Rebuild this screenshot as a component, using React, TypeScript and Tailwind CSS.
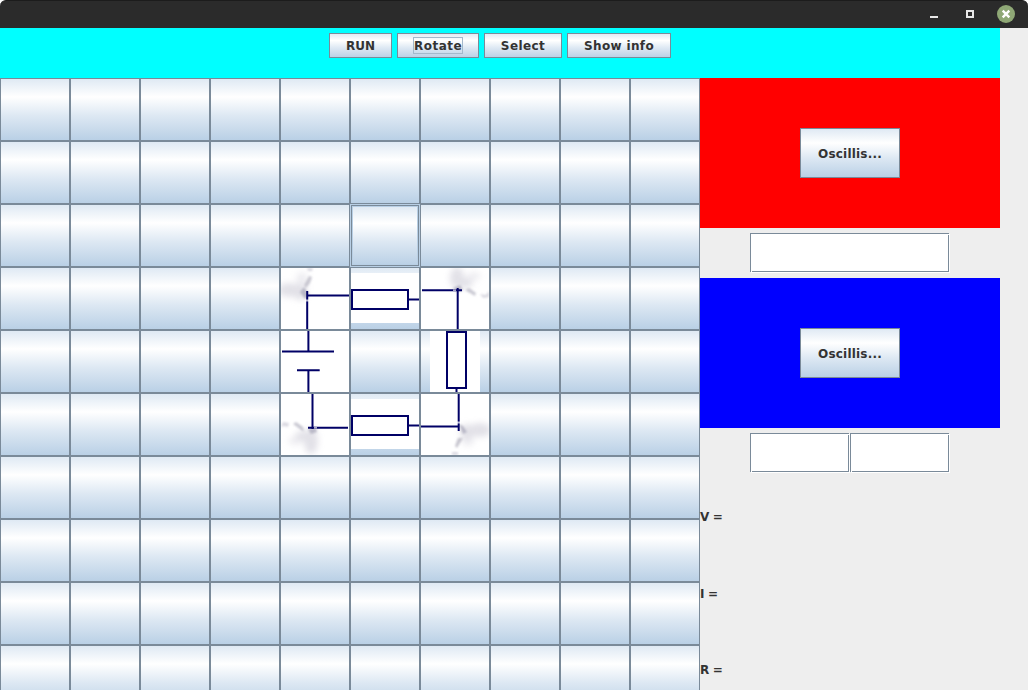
import type { ReactNode } from "react";

const METAL =
  "border border-[#7a8a99] bg-origin-border bg-[linear-gradient(180deg,#dde8f3_0%,#ffffff_30%,#dde8f3_60%,#b8cfe5_100%)]";

const INK = "#000066";

function Drawing({ children }: { children: ReactNode }) {
  return (
    <svg width="68" height="61" viewBox="0 0 68 61" className="block" fill="none" stroke={INK} strokeWidth="2">
      <defs>
        <filter id="smudge" x="-50%" y="-50%" width="200%" height="200%">
          <feGaussianBlur stdDeviation="3" />
        </filter>
        <filter id="fleck" x="-50%" y="-50%" width="200%" height="200%">
          <feGaussianBlur stdDeviation="1.3" />
        </filter>
      </defs>
      {children}
    </svg>
  );
}

const Paper = () => <rect width="68" height="61" fill="#fff" stroke="none" />;

function CornerTopLeft() {
  return (
    <Drawing>
      <Paper />
      <g stroke="none" fill="#cfcdd8">
        <g filter="url(#smudge)" opacity="0.6">
          <ellipse cx="8" cy="22" rx="11" ry="7" />
          <ellipse cx="19" cy="24" rx="7" ry="8" />
          <ellipse cx="21" cy="11" rx="6" ry="7" opacity="0.6" />
        </g>
        <g filter="url(#fleck)" opacity="0.75">
          <path d="M23 17l5-9 3 1-2 6-4 5z" fill="#b9b8c4" />
          <path d="M26 0h6l-1 3h-4z" />
          <path d="M19 24l4-5 5 8-4 4z" fill="#a9a8ba" />
        </g>
      </g>
      <path d="M26 27.5H68M26.2 23V61" />
      <path d="M24 32.5h4" stroke="#fff" opacity="0.7" />
    </Drawing>
  );
}

function CornerTopRight() {
  return (
    <Drawing>
      <Paper />
      <g stroke="none" fill="#cfcdd8">
        <g filter="url(#smudge)" opacity="0.6">
          <ellipse cx="36" cy="10" rx="7" ry="11" />
          <ellipse cx="44" cy="15" rx="8" ry="5" />
          <ellipse cx="53" cy="8" rx="7" ry="4" opacity="0.6" />
        </g>
        <g filter="url(#fleck)" opacity="0.75">
          <path d="M44 22l4-2 7 5-1 3z" fill="#b8b7c4" />
          <path d="M59 26l6 1 3-4v6l-6 1z" />
          <path d="M32 20l7-3 3 5-6 2z" fill="#a9a8ba" />
        </g>
      </g>
      <path d="M1 22.3H41M36.7 20V61" />
      <path d="M32 22.3h3" stroke="#aaa8c8" />
    </Drawing>
  );
}

function CornerBottomLeft() {
  return (
    <Drawing>
      <Paper />
      <g stroke="none" fill="#cfcdd8">
        <g filter="url(#smudge)" opacity="0.6">
          <ellipse cx="30" cy="47" rx="7" ry="13" />
          <ellipse cx="22" cy="42" rx="8" ry="5" />
          <ellipse cx="14" cy="47" rx="7" ry="4" opacity="0.6" />
        </g>
        <g filter="url(#fleck)" opacity="0.75">
          <path d="M12 30l3-2 7 5 1 5z" fill="#b8b7c4" />
          <path d="M0 33l2-5 6 1-1 4-4-1z" />
          <path d="M27 35l8-1 1 4-6 2z" fill="#a9a8ba" />
        </g>
      </g>
      <path d="M27 33.7H67M31.5 0V35" />
      <path d="M33 33.7h3" stroke="#aaa8c8" />
    </Drawing>
  );
}

function CornerBottomRight() {
  return (
    <Drawing>
      <Paper />
      <g stroke="none" fill="#cfcdd8">
        <g filter="url(#smudge)" opacity="0.6">
          <ellipse cx="59" cy="36" rx="11" ry="7" />
          <ellipse cx="46" cy="38" rx="7" ry="8" />
          <ellipse cx="47" cy="47" rx="6" ry="5" opacity="0.6" />
        </g>
        <g filter="url(#fleck)" opacity="0.75">
          <path d="M34 52l3-8 5 0-3 5-3 5z" fill="#b5b4c0" />
          <path d="M31 58h6v3h-6z" />
          <path d="M38 30l4 2 4 6-4 2z" fill="#a9a8ba" />
        </g>
      </g>
      <path d="M0 32.5H38M37.7 0V37" />
      <path d="M36 28.5h4" stroke="#fff" opacity="0.7" />
    </Drawing>
  );
}

function Battery() {
  return (
    <Drawing>
      <Paper />
      <path d="M27.4 0V20M1 20.5H53M16 39.3H38.7M27.4 39V61" />
    </Drawing>
  );
}

function ResistorHorizontal() {
  return (
    <Drawing>
      <rect y="5" width="68" height="50" fill="#fff" stroke="none" />
      <path d="M58 31.5H68" />
      <rect x="1" y="22" width="56" height="19" />
    </Drawing>
  );
}

function ResistorVertical() {
  return (
    <Drawing>
      <rect x="9" width="50" height="61" fill="#fff" stroke="none" />
      <path d="M35.5 58V61" />
      <rect x="26" y="1" width="19" height="56" />
    </Drawing>
  );
}

const parts: Record<string, ReactNode> = {
  "3-4": <CornerTopLeft />,
  "3-5": <ResistorHorizontal />,
  "3-6": <CornerTopRight />,
  "4-4": <Battery />,
  "4-6": <ResistorVertical />,
  "5-4": <CornerBottomLeft />,
  "5-5": <ResistorHorizontal />,
  "5-6": <CornerBottomRight />,
};

function Board() {
  return (
    <div className="grid h-[630px] w-[700px] shrink-0 grid-cols-10 grid-rows-10">
      {Array.from({ length: 100 }, (_, i) => {
        const key = `${Math.floor(i / 10)}-${i % 10}`;
        if (key === "2-5") {
          return (
            <button
              key={key}
              className="border border-[#b8cfe5] bg-[linear-gradient(180deg,#dde8f3_0%,#ffffff_30%,#dde8f3_60%,#b8cfe5_100%)] shadow-[inset_0_0_0_1px_#7a8a99,inset_0_0_0_2px_#b8cfe5]"
            />
          );
        }
        return (
          <button key={key} className={`overflow-hidden ${METAL}`}>
            {parts[key]}
          </button>
        );
      })}
    </div>
  );
}

function ToolButton({
  label,
  width,
  spacing,
  focused,
}: {
  label: string;
  width: string;
  spacing: string;
  focused?: boolean;
}) {
  return (
    <button className={`flex h-[25px] items-center justify-center whitespace-nowrap ${width} ${METAL}`}>
      <span
        className={`h-[17px] pt-px leading-[15px] ${spacing} ${
          focused ? "w-[50px] border border-[#a3b8cc] text-center" : "border-y border-transparent"
        }`}
      >
        {label}
      </span>
    </button>
  );
}

function Field({ width }: { width: string }) {
  return (
    <div className={`h-10 pr-px pb-px ${width}`}>
      <div className="relative h-full w-full border border-[#7a8a99] bg-white shadow-[1px_1px_0_0_#fff] before:absolute before:top-0 before:-right-px before:size-px before:bg-white after:absolute after:bottom-[-1px] after:left-0 after:size-px after:bg-white" />
    </div>
  );
}

function Scope({ color }: { color: string }) {
  return (
    <div className={`flex h-[150px] w-[300px] items-center justify-center ${color}`}>
      <button className={`h-[50px] w-[100px] pt-[2px] tracking-[0.2px] ${METAL}`}>Oscillis...</button>
    </div>
  );
}

function TitleBar() {
  return (
    <div className="flex h-7 shrink-0 items-center justify-end rounded-t-[6px] border-t border-[#1c1c1c] bg-[#2b2b2b] pr-[13px]">
      <svg width="88" height="27" viewBox="927 1 88 27">
        <rect x="930" y="16" width="8" height="2" fill="#e8e8e8" />
        <rect x="967" y="11" width="6" height="6" fill="none" stroke="#e8e8e8" strokeWidth="2" />
        <circle cx="1006" cy="14" r="9" fill="#8fa876" />
        <path d="M1002.7 10.7l6.6 6.6m0-6.6l-6.6 6.6" stroke="#fff" strokeWidth="2.4" />
      </svg>
    </div>
  );
}

export default function App() {
  return (
    <div className="flex h-[690px] w-[1028px] flex-col overflow-hidden bg-white font-['DejaVu_Sans',sans-serif] text-[12px] font-bold text-[#333333]">
      <TitleBar />
      <div className="min-h-0 flex-1 bg-[#eeeeee]">
        <div className="flex h-[50px] w-[1000px] justify-center gap-[5px] bg-[#00ffff] pt-[5px]">
          <ToolButton label="RUN" width="w-[63px]" spacing="tracking-normal" />
          <ToolButton label="Rotate" width="w-[82px]" spacing="tracking-[0.5px]" focused />
          <ToolButton label="Select" width="w-[78px]" spacing="tracking-[0.4px]" />
          <ToolButton label="Show info" width="w-[104px]" spacing="tracking-[0.35px]" />
        </div>
        <div className="flex">
          <Board />
          <div className="w-[300px]">
            <Scope color="bg-[#ff0000]" />
            <div className="flex h-[50px] justify-center pt-[5px]">
              <Field width="w-[200px]" />
            </div>
            <Scope color="bg-[#0000ff]" />
            <div className="flex h-[50px] justify-center pt-[5px]">
              <Field width="w-[100px]" />
              <Field width="w-[100px]" />
            </div>
            {["V =", "I =", "R ="].map((label) => (
              <div key={label} className="flex h-[76.5px] items-center pt-[2px] tracking-[-0.3px]">
                {label}
              </div>
            ))}
          </div>
        </div>
      </div>
    </div>
  );
}
